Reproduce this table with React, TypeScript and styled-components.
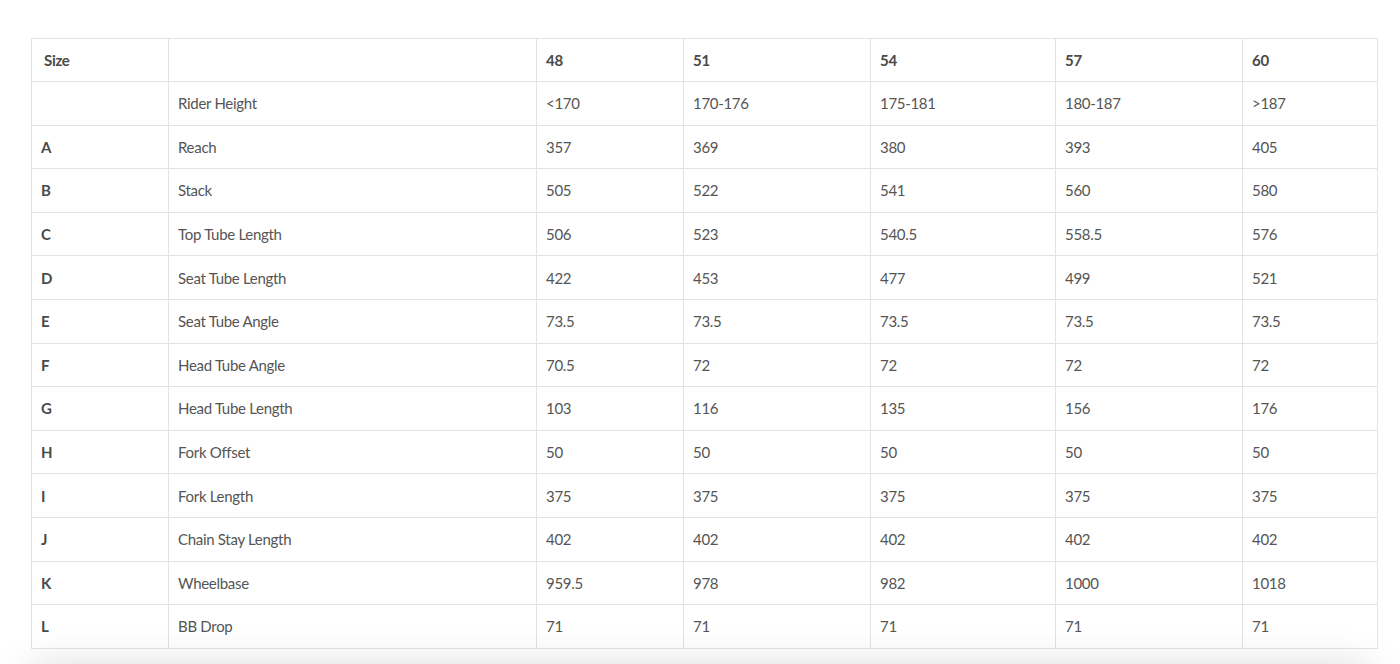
import React from "react";
import styled, { createGlobalStyle } from "styled-components";

const Global = createGlobalStyle`
  html, body { margin: 0; padding: 0; background: #fff; }
  body { font-family: Lato, "Noto Sans", sans-serif; overflow: hidden; }
`;

const Page = styled.div`
  padding: 38px 23px 0 31px;
  height: 664px;
  box-sizing: border-box;
`;

const Table = styled.table`
  width: 1346px;
  border-collapse: collapse;
  table-layout: fixed;
  border: 1px solid #e3e3e3;
  font-size: 15px;
  letter-spacing: -0.3px;
  color: #555;
`;

const Row = styled.tr<{ $head?: boolean }>`
  height: ${(p) => (p.$head ? "43px" : "43.6px")};
`;

const Cell = styled.td<{ $pad?: number; $bold?: boolean }>`
  border: 1px solid #e3e3e3;
  padding: 0 0 0 ${(p) => p.$pad ?? 9}px;
  font-weight: ${(p) => (p.$bold ? 700 : 400)};
  color: ${(p) => (p.$bold ? "#4a4a4a" : "#555")};
  vertical-align: middle;
  white-space: nowrap;
  line-height: 20px;
`;

const HeadCell = styled.th<{ $pad?: number }>`
  border: 1px solid #e3e3e3;
  padding: 0 0 0 ${(p) => p.$pad ?? 9}px;
  font-weight: 700;
  color: #4a4a4a;
  text-align: left;
  vertical-align: middle;
  line-height: 20px;
`;

const BottomShade = styled.div`
  position: fixed;
  left: 50px;
  right: 50px;
  top: 686px;
  height: 60px;
  box-shadow: 0 0 42px 18px rgba(0, 0, 0, 0.16);
  pointer-events: none;
`;

const widths = [137, 368, 147, 187, 185, 187, 135];
const sizes = ["48", "51", "54", "57", "60"];

const rows: [string, string, string[]][] = [
  ["", "Rider Height", ["<170", "170-176", "175-181", "180-187", ">187"]],
  ["A", "Reach", ["357", "369", "380", "393", "405"]],
  ["B", "Stack", ["505", "522", "541", "560", "580"]],
  ["C", "Top Tube Length", ["506", "523", "540.5", "558.5", "576"]],
  ["D", "Seat Tube Length", ["422", "453", "477", "499", "521"]],
  ["E", "Seat Tube Angle", ["73.5", "73.5", "73.5", "73.5", "73.5"]],
  ["F", "Head Tube Angle", ["70.5", "72", "72", "72", "72"]],
  ["G", "Head Tube Length", ["103", "116", "135", "156", "176"]],
  ["H", "Fork Offset", ["50", "50", "50", "50", "50"]],
  ["I", "Fork Length", ["375", "375", "375", "375", "375"]],
  ["J", "Chain Stay Length", ["402", "402", "402", "402", "402"]],
  ["K", "Wheelbase", ["959.5", "978", "982", "1000", "1018"]],
  ["L", "BB Drop", ["71", "71", "71", "71", "71"]],
];

export default function App() {
  return (
    <>
      <Global />
      <Page>
        <Table>
          <colgroup>
            {widths.map((w, i) => (
              <col key={i} style={{ width: w }} />
            ))}
          </colgroup>
          <thead>
            <Row $head>
              <HeadCell $pad={12}>Size</HeadCell>
              <HeadCell />
              {sizes.map((s) => (
                <HeadCell key={s}>{s}</HeadCell>
              ))}
            </Row>
          </thead>
          <tbody>
            {rows.map(([letter, name, vals]) => (
              <Row key={name}>
                <Cell $bold>{letter}</Cell>
                <Cell>{name}</Cell>
                {vals.map((v, i) => (
                  <Cell key={i}>{v}</Cell>
                ))}
              </Row>
            ))}
          </tbody>
        </Table>
      </Page>
      <BottomShade />
    </>
  );
}
